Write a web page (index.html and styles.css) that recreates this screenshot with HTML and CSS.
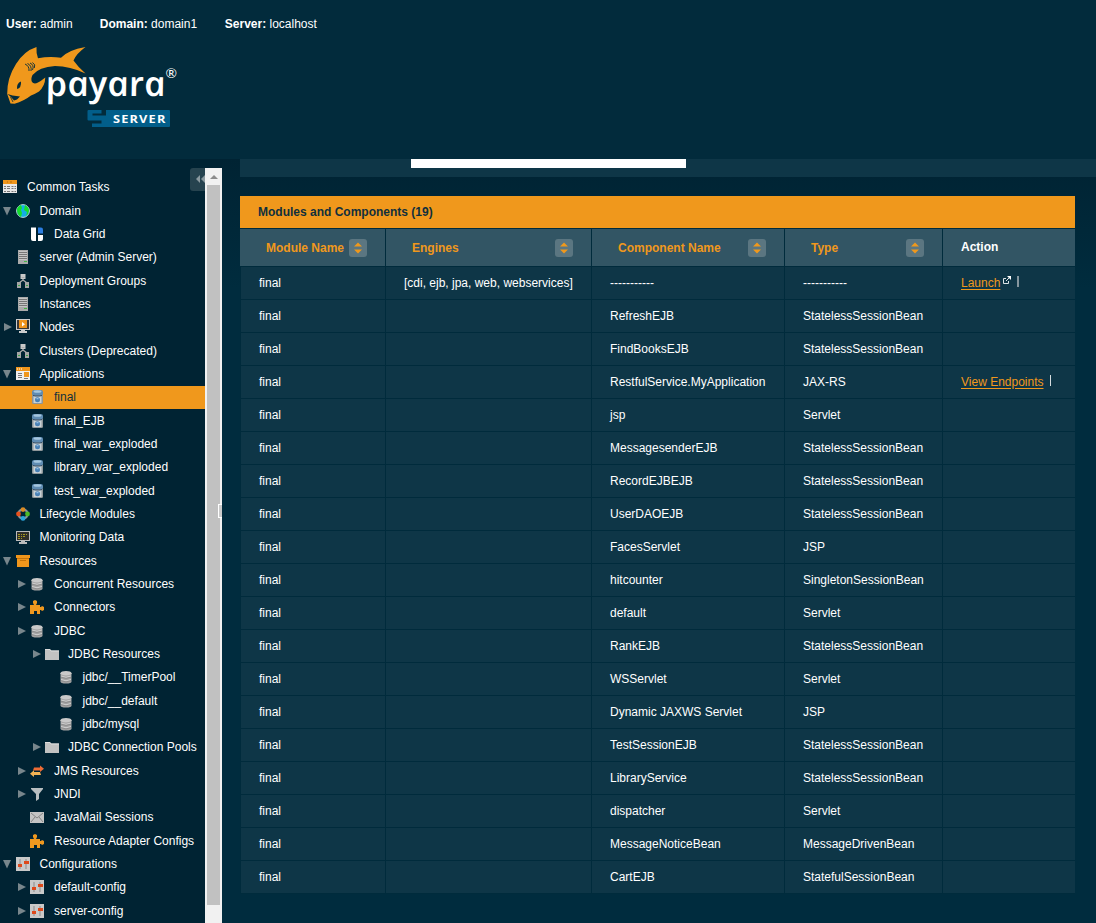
FILE: index.html
```html
<!DOCTYPE html>
<html lang="en">
<head>
<meta charset="utf-8">
<title>Payara Server Console</title>
<link rel="stylesheet" href="styles.css">
</head>
<body>
<svg class="defs" width="0" height="0">
  <symbol id="tasks" viewBox="0 0 14 14"><path fill="#e8e8e8" d="M0 1h14v12H0z"/><path fill="#ef961c" d="M0 0h14v4H0z"/><path fill="#b56c0b" d="M4 1.500h1v1H4zm3 0h2v1H7z"/><path stroke="#777" stroke-dasharray="2 1 3 1.500" d="M1 6.500h12M1 8.500h12M1 11.500h12"/></symbol>
  <symbol id="globe" viewBox="0 0 14 14"><circle cx="7" cy="7" r="6.400" fill="#14aee4" stroke="#b9d5d2"/><path fill="#16dd2a" d="M1 5q1-3 4-4l1 3-1 2 1 3-1 4Q1 11 1 5zM9 1q4 2 4 6-1 4-3 5l1-4-3-2z"/></symbol>
  <symbol id="grid" viewBox="0 0 14 14"><path fill="#fff" d="M1 .500h5V14H3q-2 0-2-2z M8 8h5v4q0 2-2 2H8z"/><path fill="#2b7de1" d="M8 .500h3q2 0 2 2V6.500H8z"/></symbol>
  <symbol id="server" viewBox="0 0 14 14"><path fill="#aaa" d="M2 0h10v14H2z"/><path fill="#c5c5c5" d="M3 1h8v9H3z"/><path stroke="#777" d="M3 2.500h8M3 4.500h8M3 6.500h8M3 8.500h8"/><path stroke="#42b845" d="M8 11.500h3"/></symbol>
  <symbol id="cluster" viewBox="0 0 14 14"><path fill="none" stroke="#aaa" stroke-width="1.300" d="M7 4v2L3 9M7 6l4 3"/><path fill="#c9c9c9" d="M4.500 0h5v5h-5z"/><path fill="#a5a5a5" d="M1 8h4v6H1zM9 8h4v6H9z"/><path fill="#3da747" d="M2 11h2v1H2zm8 0h2v1h-2z"/><path fill="#aaa" d="M5.500 3h3v1h-3z"/></symbol>
  <symbol id="node" viewBox="0 0 14 14"><path fill="#ccc" d="M0 0h14v11H9v1h2v2H3v-2h2v-1H0z"/><path fill="#3c3937" d="M1 1h12v9H1z"/><path fill="#f0941c" d="M3 1h8v8H3z"/><path fill="#fff" d="M6 3l3 2.300L6 7.500z"/></symbol>
  <symbol id="app" viewBox="0 0 14 14"><path fill="#eee" d="M0 1h14v12H0z"/><path fill="#ef961c" d="M0 0h14v4H0zM8 5h5v5H8z"/><path stroke="#fff" d="M1 2h1m1 0h1m1 0h1"/><path stroke="#777" d="M2 6.500h4M2 8.500h4M2 10.500h4M8 11.500h4"/></symbol>
  <symbol id="jar" viewBox="0 0 14 14"><rect x="2" y="4" width="11" height="10" rx="1.500" fill="#8e9699"/><path fill="#c9d2d6" d="M3.500 6h8v7h-8z"/><rect x="2" y="0" width="11" height="5.500" rx="2" fill="#5f8cb3"/><ellipse cx="7.500" cy="1.500" rx="4" ry="1.300" fill="#a6c7df"/><path fill="#304d67" d="M3 5q4.500 1 9 0v1q-4.500 1-9 0z"/><circle cx="7.500" cy="9.700" r="2.500" fill="#4780b5"/><path stroke="#a3cced" d="M6.500 8.700h2"/></symbol>
  <symbol id="life" viewBox="0 0 14 14"><circle cx="7" cy="7" r="4.500" fill="none" stroke="#87959b" stroke-width="2.500"/><circle cx="7" cy="2.600" r="2.400" fill="#d98b25"/><circle cx="2.500" cy="7" r="2.400" fill="#e8501c"/><circle cx="11.500" cy="7" r="2.400" fill="#4cb926"/><circle cx="7" cy="11.400" r="2.400" fill="#2aa5da"/></symbol>
  <symbol id="monitor" viewBox="0 0 14 14"><path fill="#bbb" d="M0 1h14v10H9v1h2v2H3v-2h2v-1H0z"/><path fill="#302f2a" d="M1 2h12v8H1z"/><path stroke="#a69a21" stroke-dasharray="2 1 1 1" d="M2 4.500h9M2 6.500h7M2 8.500h4"/></symbol>
  <symbol id="box" viewBox="0 0 14 14"><path fill="#ef961c" d="M0 1h14v3h-1v9H1V4H0z"/><path fill="#c47309" d="M1 4h12v1H1zM4 6h6v1H4z"/></symbol>
  <symbol id="db" viewBox="0 0 14 14"><path fill="#a3a3a3" d="M1.500 3v8.500q0 2 5.500 2t5.500-2V3z"/><ellipse cx="7" cy="3.200" rx="5.500" ry="2.300" fill="#c9c9c9"/><path fill="none" stroke="#d0d0d0" d="M2 6q5 2.500 10 0M2 9.500q5 2.500 10 0"/><path fill="none" stroke="#808080" stroke-width=".6" d="M2 7.200q5 2.500 10 0M2 10.700q5 2.500 10 0"/></symbol>
  <symbol id="puzzle" viewBox="0 0 14 14"><path fill="#ef981f" d="M0 5h4L3 3V1l2-1 2 1v2L6 5h4v2h1l1-1 2 1v3l-2 1-1-1h-1v4H7v-3H4v3H0z"/></symbol>
  <symbol id="folder" viewBox="0 0 14 14"><path fill="#c2c2c2" d="M0 2h5l1 1.500h8V13H0z"/><path stroke="#ddd" d="M0 2.500h5l1 1.500h8" fill="none"/></symbol>
  <symbol id="jms" viewBox="0 0 14 14"><path fill="#ef6c35" d="M4 3.500h6V1.500l4 3.200-4 3.300V6.500H3z"/><path fill="#f2b254" d="M10 8H4V6.300L0 9.700 4 13v-2h7z"/></symbol>
  <symbol id="funnel" viewBox="0 0 14 14"><path fill="#b8bec0" d="M1 1h12v1L9 7v5l-3 2V7L1 2z"/></symbol>
  <symbol id="mail" viewBox="0 0 14 14"><path fill="#c4c4c4" d="M0 2h14v11H0z"/><path fill="none" stroke="#858585" d="M1 3l6 5 6-5M1 12l4-5m8 5L9 7"/></symbol>
  <symbol id="config" viewBox="0 0 14 14"><path fill="#c9c9c9" d="M0 0h14v14H0z"/><path stroke="#8b8b8b" d="M4 2v10M10 2v10"/><path fill="#de491b" d="M2 7h4v3H2zM8 4h5v3H8z"/></symbol>
</svg>

<header class="masthead">
  <div class="status"><span><b>User:</b> admin</span><span><b>Domain:</b> domain1</span><span class="host"><b>Server:</b> localhost</span></div>
  <svg class="logo" width="180" height="88" viewBox="0 42 180 88">
    <path fill="#f0981c" d="M36.500 47Q36 53 38 58.200 50 56 61 57.800 68 50 85.500 47 76 54 73.500 60.500 78 67 85.500 73.500 70 66 55 66 39 67 32.500 75 30.500 79 32 82 34 84.500 38 82.500 41 81 45.300 77.500 45 86 39 91.500 35 94 31 95.500 24 101 14.500 103.800L10.500 103.500 7.200 94Q7 78 16 64 24 51 36.500 47z"/>
    <path fill="#022b3c" d="M17 89q-.5-6 4-7.500.5 6.500-4 7.500zM7.500 94l5 1.500 7.500 1-3 3-3 1-2.500-3z"/>
    <path fill="none" stroke="#022b3c" stroke-width=".9" d="M25 64q4.500 2 4 7M27.500 63.500q4.500 2 3.500 7.500M30 63q4.500 2 2.500 7M32.500 62.500q3.500 2 1.800 5.500"/>
    <path fill="none" stroke="#022b3c" stroke-width=".8" d="M10.500 97l2.500 5"/>
    <text class="wordmark" transform="translate(47.500 96) skewX(12)" x="0" y="0" textLength="120" lengthAdjust="spacingAndGlyphs">payara</text>
    <text class="reg" x="165.500" y="77.500" textLength="11.500" lengthAdjust="spacingAndGlyphs">®</text>
    <path fill="#025e8a" d="M88.500 110H101.500V113.500H92.500V115.500H106V110H169q1 0 1 1v15q0 1-1 1H92V123.500H101.500V120.500H88.500q-1 0-1-1V111q0-1 1-1z"/>
    <text class="product" x="113" y="122.600" textLength="53.500" lengthAdjust="spacingAndGlyphs">SERVER</text>
  </svg>
</header>

<div class="workspace">
  <aside class="sidebar">
    <nav class="tree" id="tree"></nav>
    <div class="collapse"><svg width="12" height="10" viewBox="0 0 12 10"><path fill="#8a999f" d="M5 1v8L1 5zM10 1v8L6 5z"/></svg></div>
    <div class="scrollbar"><i class="up"></i><i class="thumb"></i><i class="grip"></i></div>
  </aside>
  <main class="content">
    <div class="strip"><div class="field"></div></div>
    <table class="modules">
      <caption>Modules and Components (19)</caption>
      <colgroup><col class="c1"><col class="c2"><col class="c3"><col class="c4"><col class="c5"></colgroup>
      <thead><tr id="head"></tr></thead>
      <tbody id="body"></tbody>
    </table>
  </main>
</div>
<script src="app.js"></script>
</body>
</html>
```
FILE: styles.css
```css
* { box-sizing: border-box; }
body {
  margin: 0;
  width: 1096px;
  height: 923px;
  overflow: hidden;
  background: #002c3e;
  color: #fff;
  font: 12px/16px "Liberation Sans", Arial, sans-serif;
}
.defs { position: absolute; }
.masthead { height: 159px; padding: 16px 0 0 6px; background: #022b3c; }
.status { display: flex; gap: 27px; }
.host { margin-left: .7px; }
.logo { display: block; margin: 10px 0 0 -6px; }
.wordmark { font: italic 600 34.500px "Open Sans", sans-serif; fill: #fff; }
.reg { font: 14px Lato, sans-serif; fill: #fff; }
.product { font: 700 11px "Open Sans", sans-serif; letter-spacing: 1px; fill: #fff; }

.workspace {
  display: flex;
  height: 764px;
  background: linear-gradient(#002333, #002c3e 130px);
}
.sidebar { position: relative; width: 222px; overflow: hidden; background: #002333; }
.tree { padding-top: 16.800px; width: 205px; }
.item { display: flex; align-items: center; height: 23.340px; white-space: nowrap; }
.item.on { background: #f0981c; color: #10303d; }
.item .arrow { width: 13px; height: 10px; flex: none; }
.item .icon { width: 14px; height: 14px; flex: none; margin-right: 9.500px; }
.item .icon.node { margin-bottom: 3px; }
.l0 { padding-left: 3px; }
.l0 .icon { margin-right: 10px; }
.l1 { padding-left: 3px; }
.l2 { padding-left: 17px; }
.l2 .icon { margin-right: 10px; }
.l3 { padding-left: 32px; }
.l3 .icon { margin-right: 9px; }
.l4 { padding-left: 46px; }
.collapse {
  position: absolute; left: 190px; top: 9px;
  width: 23px; height: 23px; padding: 6px 5px;
  border-radius: 3px; background: #26434f;
}
.collapse svg { display: block; }
.scrollbar {
  position: absolute; left: 205px; top: 9px;
  width: 17px; height: 755px; padding: 0 2px; background: #f1f1f1;
}
.up { display: block; height: 17px; padding-top: 7px; }
.up::before {
  content: ""; display: block; width: 0; margin-left: 3px;
  border: 4px solid transparent; border-top: 0; border-bottom-color: #8c8c8c;
}
.thumb { display: block; height: 720px; background: #c1c1c1; }
.grip {
  position: absolute; right: 0; top: 336px;
  width: 4px; height: 14px; border: 1px solid #fff; border-right: 0; background: #ccc;
}

.content { flex: 1; padding-left: 18px; }
.strip { height: 18px; background: #0e3647; padding-left: 171px; }
.field { width: 275px; height: 9px; background: #fff; }
.modules {
  width: 835px; margin-top: 19px;
  table-layout: fixed; border-spacing: 0; border-collapse: separate;
}
.modules caption {
  height: 33px; padding: 8px 18px; text-align: left; font-weight: 700;
  background: #f0981c; color: #10303d; border-bottom: 1px solid #002b3c;
}
.c1 { width: 146px; } .c2 { width: 206px; } .c3 { width: 193px; } .c4 { width: 158px; } .c5 { width: 132px; }
.modules th, .modules td {
  text-align: left; white-space: nowrap; vertical-align: middle;
  border: 0 solid #002b3c; border-width: 0 1px 1px 0;
}
.modules th { height: 38px; padding: 0 18px 0 26px; background: #325564; color: #f0981c; }
.modules td { height: 33px; padding: 0 0 1px 18px; background: #0e3647; }
.modules td:first-child { border-left-width: 1px; }
.modules th:last-child, .modules td:last-child { border-right: 0; }
.modules th:last-child { padding: 0 0 1px 18px; color: #fff; }
.head { display: flex; justify-content: space-between; align-items: center; }
.sort {
  display: flex; align-items: center; justify-content: center;
  width: 18px; height: 18px; border-radius: 3px; background: #5b7681;
}
a { color: #f0981c; text-decoration: underline; text-underline-offset: 2px; }
.ext { margin: 0 6px 0 2px; vertical-align: 2px; }
.bar { display: inline-block; width: 1px; height: 11px; margin-left: 6px; background: #d5dcdf; vertical-align: 0; }
.bar.dim { width: 2px; margin-left: 0; background: #85969e; }
```
FILE: app.js
```javascript
const tree = [
  [0, 'tasks', 'Common Tasks'],
  [1, 'globe', 'Domain', 'd'],
  [2, 'grid', 'Data Grid'],
  [1, 'server', 'server (Admin Server)'],
  [1, 'cluster', 'Deployment Groups'],
  [1, 'server', 'Instances'],
  [1, 'node', 'Nodes', 'r'],
  [1, 'cluster', 'Clusters (Deprecated)'],
  [1, 'app', 'Applications', 'd'],
  [2, 'jar', 'final', '', 'on'],
  [2, 'jar', 'final_EJB'],
  [2, 'jar', 'final_war_exploded'],
  [2, 'jar', 'library_war_exploded'],
  [2, 'jar', 'test_war_exploded'],
  [1, 'life', 'Lifecycle Modules'],
  [1, 'monitor', 'Monitoring Data'],
  [1, 'box', 'Resources', 'd'],
  [2, 'db', 'Concurrent Resources', 'r'],
  [2, 'puzzle', 'Connectors', 'r'],
  [2, 'db', 'JDBC', 'r'],
  [3, 'folder', 'JDBC Resources', 'r'],
  [4, 'db', 'jdbc/__TimerPool'],
  [4, 'db', 'jdbc/__default'],
  [4, 'db', 'jdbc/mysql'],
  [3, 'folder', 'JDBC Connection Pools', 'r'],
  [2, 'jms', 'JMS Resources', 'r'],
  [2, 'funnel', 'JNDI', 'r'],
  [2, 'mail', 'JavaMail Sessions'],
  [2, 'puzzle', 'Resource Adapter Configs'],
  [1, 'config', 'Configurations', 'd'],
  [2, 'config', 'default-config', 'r'],
  [2, 'config', 'server-config', 'r']
];
const arrows = { d: 'M0 1h8L4 9.500z', r: 'M1 1v8l8-4z' };

document.getElementById('tree').innerHTML = tree.map(([level, icon, label, arrow, state]) => {
  const marker = level === 0 ? '' :
    `<svg class="arrow" viewBox="0 0 13 10"><path fill="#78868c" d="${arrows[arrow] || ''}"/></svg>`;
  return `<div class="item l${level} ${state || ''}">${marker}<svg class="icon ${icon}"><use href="#${icon}"/></svg><span>${label}</span></div>`;
}).join('');

const sort = '<span class="sort"><svg width="8" height="12" viewBox="0 0 8 12"><path fill="#f0981c" d="M4 .500l4 4H0zM4 11.500l4-4H0z"/></svg></span>';
document.getElementById('head').innerHTML =
  ['Module Name', 'Engines', 'Component Name', 'Type']
    .map(name => `<th><div class="head">${name}${sort}</div></th>`).join('') + '<th>Action</th>';

const ext = '<svg class="ext" width="9" height="9" viewBox="0 0 9 9"><path fill="none" stroke="#dce3e6" d="M4 2.500H1.500v5h5V5M4 5l4-4"/><path fill="#fff" d="M5 0h4v4z"/></svg>';
const S = 'StatelessSessionBean';
const rows = [
  ['-----------', '-----------'], ['RefreshEJB', S], ['FindBooksEJB', S],
  ['RestfulService.MyApplication', 'JAX-RS'], ['jsp', 'Servlet'], ['MessagesenderEJB', S],
  ['RecordEJBEJB', S], ['UserDAOEJB', S], ['FacesServlet', 'JSP'],
  ['hitcounter', 'SingletonSessionBean'], ['default', 'Servlet'], ['RankEJB', S],
  ['WSServlet', 'Servlet'], ['Dynamic JAXWS Servlet', 'JSP'], ['TestSessionEJB', S],
  ['LibraryService', S], ['dispatcher', 'Servlet'], ['MessageNoticeBean', 'MessageDrivenBean'],
  ['CartEJB', 'StatefulSessionBean']
];
const actions = {
  0: `<a>Launch</a>${ext}<i class="bar dim"></i>`,
  3: '<a>View Endpoints</a><i class="bar"></i>'
};
document.getElementById('body').innerHTML = rows.map(([name, type], i) =>
  `<tr><td>final</td><td>${i ? '' : '[cdi, ejb, jpa, web, webservices]'}</td><td>${name}</td><td>${type}</td><td>${actions[i] || ''}</td></tr>`
).join('');
```
